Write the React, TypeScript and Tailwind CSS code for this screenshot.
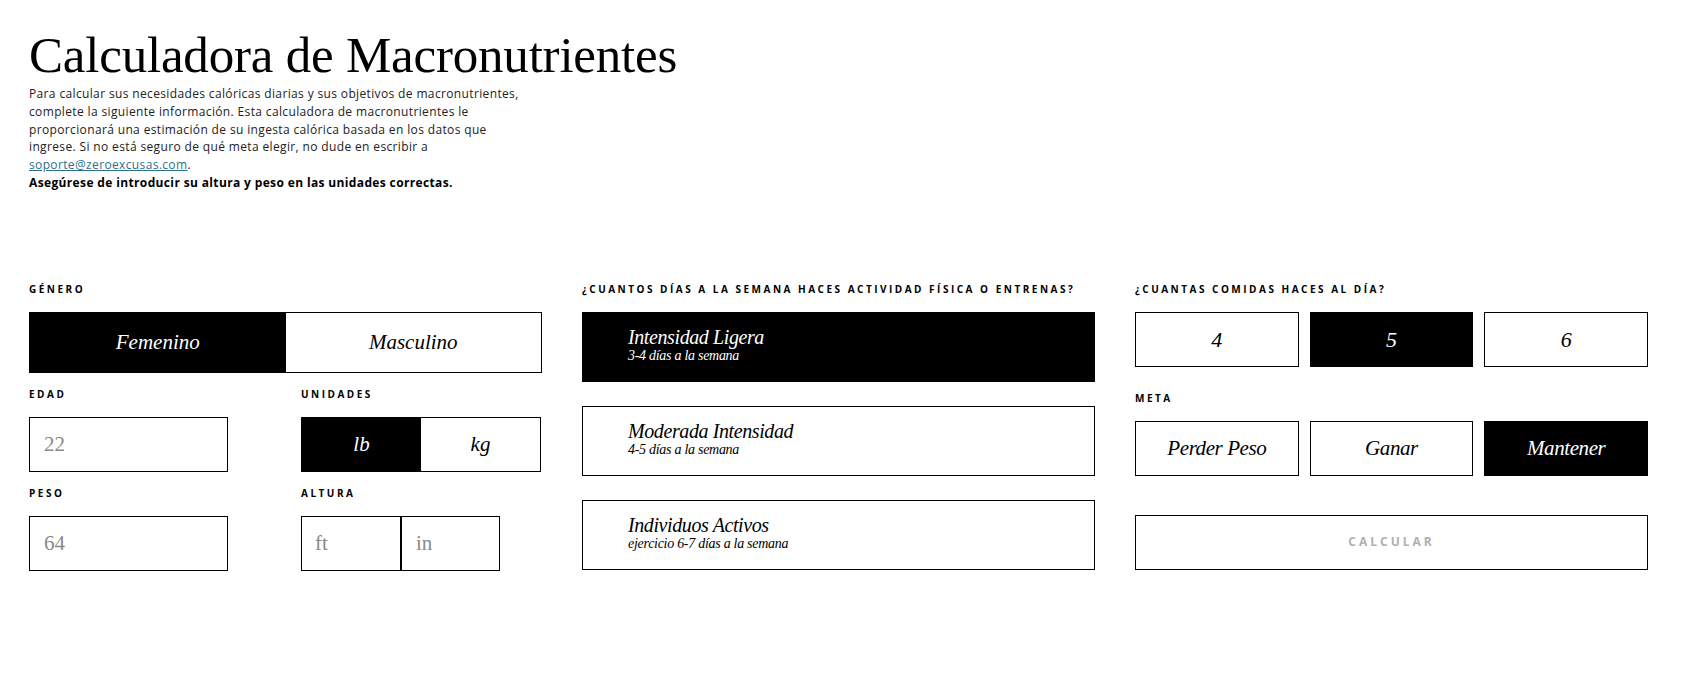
import { useState } from "react"

const serif = "font-['Liberation_Serif',serif]"
const sans = "font-['Open_Sans',sans-serif]"

function Label({ children }: { children: React.ReactNode }) {
  return (
    <div className={`${sans} h-[14px] mb-[15px] flex items-center text-[10px] font-bold tracking-[0.25em] text-black uppercase`}>
      {children}
    </div>
  )
}

const ACTIVITY = [
  { title: "Intensidad Ligera", sub: "3-4 días a la semana" },
  { title: "Moderada Intensidad", sub: "4-5 días a la semana" },
  { title: "Individuos Activos", sub: "ejercicio 6-7 días a la semana" },
]

export default function App() {
  const [gender, setGender] = useState("f")
  const [units, setUnits] = useState("lb")
  const [activity, setActivity] = useState(0)
  const [meals, setMeals] = useState(5)
  const [goal, setGoal] = useState("Mantener")

  const toggle = (active: boolean) =>
    active ? "bg-black text-white" : "bg-white text-black"

  return (
    <div className="min-h-screen bg-white px-[29px] pt-[27px] text-black">
      {/* Header */}
      <h1 className={`${serif} text-[51px] leading-[56px] tracking-[-0.004em]`}>
        Calculadora de Macronutrientes
      </h1>
      <p className={`${sans} mt-[2px] text-[12px] leading-[17.8px] tracking-[0.03em] text-[#222]`}>
        Para calcular sus necesidades calóricas diarias y sus objetivos de macronutrientes,
        <br />
        complete la siguiente información. Esta calculadora de macronutrientes le
        <br />
        proporcionará una estimación de su ingesta calórica basada en los datos que
        <br />
        ingrese. Si no está seguro de qué meta elegir, no dude en escribir a
        <br />
        <a href="#" className="text-[#2b6f8f] underline">
          soporte@zeroexcusas.com
        </a>
        .
        <br />
        <span className="font-bold text-black">
          Asegúrese de introducir su altura y peso en las unidades correctas.
        </span>
      </p>

      {/* Form */}
      <div className="mt-[91px] grid grid-cols-[513px_513px_513px] gap-x-[40px]">
        {/* Column 1 */}
        <div>
          <Label>Género</Label>
          <div className="grid h-[61px] grid-cols-2 border border-black">
            <button
              onClick={() => setGender("f")}
              className={`${serif} ${toggle(gender === "f")} text-[21px] italic`}
            >
              Femenino
            </button>
            <button
              onClick={() => setGender("m")}
              className={`${serif} ${toggle(gender === "m")} text-[21px] italic`}
            >
              Masculino
            </button>
          </div>

          <div className="mt-[15px] grid grid-cols-[240px_240px] gap-x-[32px]">
            <div>
              <Label>Edad</Label>
              <input
                placeholder="22"
                className={`${serif} h-[55px] w-[199px] border border-black px-[14px] text-[21px] outline-none placeholder:text-[#8a8a8a]`}
              />
            </div>
            <div>
              <Label>Unidades</Label>
              <div className="grid h-[55px] grid-cols-2 border border-black">
                <button
                  onClick={() => setUnits("lb")}
                  className={`${serif} ${toggle(units === "lb")} text-[21px] italic`}
                >
                  lb
                </button>
                <button
                  onClick={() => setUnits("kg")}
                  className={`${serif} ${toggle(units === "kg")} text-[21px] italic`}
                >
                  kg
                </button>
              </div>
            </div>
          </div>

          <div className="mt-[15px] grid grid-cols-[240px_240px] gap-x-[32px]">
            <div>
              <Label>Peso</Label>
              <input
                placeholder="64"
                className={`${serif} h-[55px] w-[199px] border border-black px-[14px] text-[21px] outline-none placeholder:text-[#8a8a8a]`}
              />
            </div>
            <div>
              <Label>Altura</Label>
              <div className="flex w-[199px]">
                <input
                  placeholder="ft"
                  className={`${serif} h-[55px] w-[100px] border border-black px-[13px] text-[21px] outline-none placeholder:text-[#8a8a8a]`}
                />
                <input
                  placeholder="in"
                  className={`${serif} h-[55px] w-[99px] border border-black px-[14px] text-[21px] outline-none placeholder:text-[#8a8a8a]`}
                />
              </div>
            </div>
          </div>
        </div>

        {/* Column 2 */}
        <div>
          <Label>¿Cuantos días a la semana haces actividad física o entrenas?</Label>
          <div className="flex flex-col gap-[24px]">
            {ACTIVITY.map((a, i) => (
              <button
                key={a.title}
                onClick={() => setActivity(i)}
                className={`${serif} ${toggle(activity === i)} flex h-[70px] flex-col items-start border border-black pl-[45px] pt-[13px] text-left italic`}
              >
                <span className="text-[20px] leading-[22px] tracking-[-0.02em]">{a.title}</span>
                <span className="text-[14px] leading-[15px] tracking-[-0.02em]">{a.sub}</span>
              </button>
            ))}
          </div>
        </div>

        {/* Column 3 */}
        <div>
          <Label>¿Cuantas comidas haces al día?</Label>
          <div className="grid grid-cols-3 gap-x-[11px]">
            {[4, 5, 6].map((n) => (
              <button
                key={n}
                onClick={() => setMeals(n)}
                className={`${serif} ${toggle(meals === n)} h-[55px] border border-black text-[22px] italic`}
              >
                {n}
              </button>
            ))}
          </div>

          <div className="mt-[25px]">
            <Label>Meta</Label>
            <div className="grid grid-cols-3 gap-x-[11px]">
              {["Perder Peso", "Ganar", "Mantener"].map((g) => (
                <button
                  key={g}
                  onClick={() => setGoal(g)}
                  className={`${serif} ${toggle(goal === g)} h-[55px] border border-black text-[21px] italic tracking-[-0.02em]`}
                >
                  {g}
                </button>
              ))}
            </div>
          </div>

          <button
            className={`${sans} mt-[39px] h-[55px] w-full border border-black text-[12px] font-bold tracking-[0.25em] text-[#b0b0b0]`}
          >
            CALCULAR
          </button>
        </div>
      </div>
    </div>
  )
}
